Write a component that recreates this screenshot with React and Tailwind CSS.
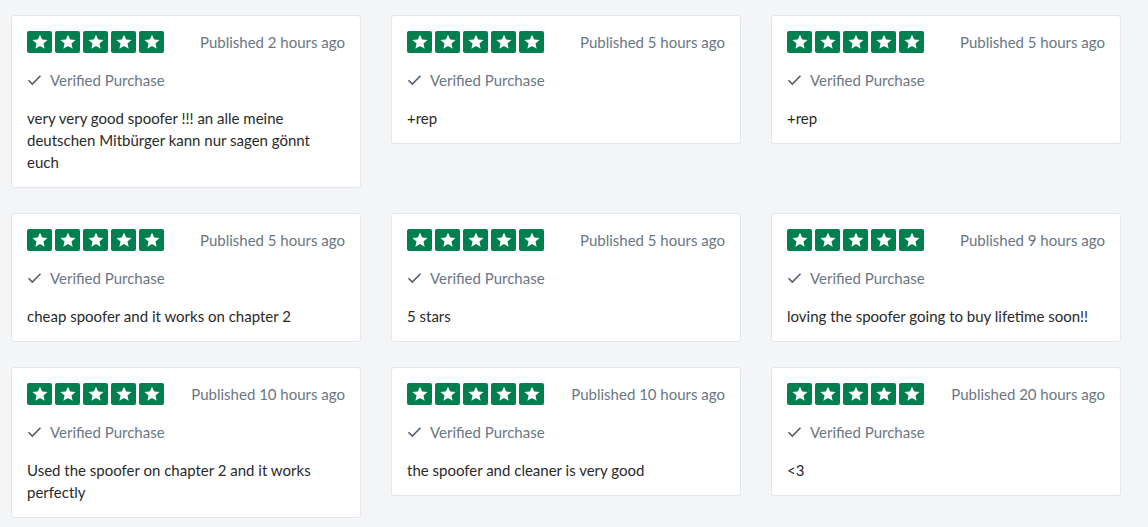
import React from "react";

const reviews = [
  { time: "Published 2 hours ago", text: "very very good spoofer !!! an alle meine deutschen Mitbürger kann nur sagen gönnt euch" },
  { time: "Published 5 hours ago", text: "+rep" },
  { time: "Published 5 hours ago", text: "+rep" },
  { time: "Published 5 hours ago", text: "cheap spoofer and it works on chapter 2" },
  { time: "Published 5 hours ago", text: "5 stars" },
  { time: "Published 9 hours ago", text: "loving the spoofer going to buy lifetime soon!!" },
  { time: "Published 10 hours ago", text: "Used the spoofer on chapter 2 and it works perfectly" },
  { time: "Published 10 hours ago", text: "the spoofer and cleaner is very good" },
  { time: "Published 20 hours ago", text: "<3" },
];

function Star() {
  return (
    <div className="w-[25px] h-[22px] bg-[#00804f] rounded-[2px] flex items-center justify-center">
      <svg width="18" height="18" viewBox="0 0 24 24">
        <path
          fill="#fff"
          d="M12 2.2l2.9 6.6 7.1.6-5.4 4.7 1.6 7-6.2-3.7-6.2 3.7 1.6-7L2 9.4l7.1-.6z"
        />
      </svg>
    </div>
  );
}

function Card({ time, text }) {
  return (
    <div className="bg-white border border-[#e3e6ea] rounded-[3px] px-[15px] pt-[15px] pb-[14px]">
      <div className="flex items-center justify-between h-[22px]">
        <div className="flex gap-[3px]">
          <Star />
          <Star />
          <Star />
          <Star />
          <Star />
        </div>
        <span className="text-[15px] text-[#6b7684] leading-[22px]">{time}</span>
      </div>
      <div className="flex items-center mt-[16px] h-[22px]">
        <svg width="15" height="12" viewBox="0 0 15 12">
          <path d="M1.5 6.3l3.8 3.8L13.5 1.8" fill="none" stroke="#555f6b" strokeWidth="1.6" />
        </svg>
        <span className="ml-[8px] text-[15px] text-[#6b7684] leading-[22px]">Verified Purchase</span>
      </div>
      <p className="mt-[16px] text-[15px] leading-[22px] text-[#2a2a2a]">{text}</p>
    </div>
  );
}

export default function App() {
  return (
    <div
      className="min-h-[527px] bg-[#f4f5f7] pl-[11px] pt-[15px]"
      style={{ fontFamily: "Lato, 'Open Sans', sans-serif" }}
    >
      <div className="grid grid-cols-[350px_350px_350px] gap-x-[30px] gap-y-[25px] items-start">
        {reviews.map((r, i) => (
          <Card key={i} {...r} />
        ))}
      </div>
    </div>
  );
}
